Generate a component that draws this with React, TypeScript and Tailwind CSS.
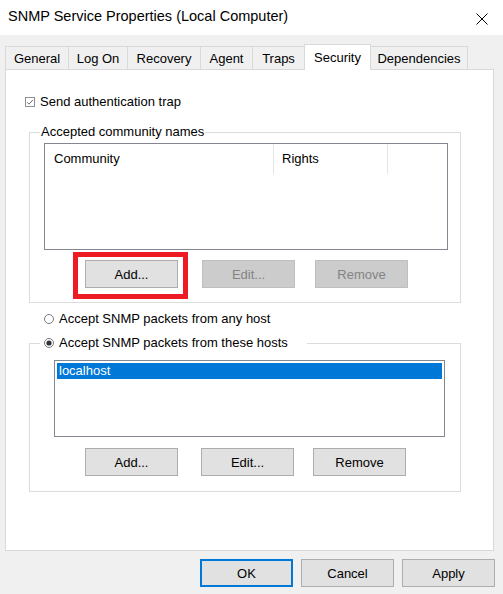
import React from 'react';

const tabs = [
  { label: 'General', w: 'w-[64px]' },
  { label: 'Log On', w: 'w-[60px]' },
  { label: 'Recovery', w: 'w-[74px]' },
  { label: 'Agent', w: 'w-[53px]' },
  { label: 'Traps', w: 'w-[53px]' },
  { label: 'Security', w: 'w-[67px]', active: true },
  { label: 'Dependencies', w: 'w-[98px]' },
];

const WinButton: React.FC<{ label: string; disabled?: boolean; isDefault?: boolean; className?: string; children?: React.ReactNode }> = ({
  label,
  disabled,
  isDefault,
  className = '',
  children,
}) => {
  const look = disabled
    ? 'bg-[#cccccc] border-[#bfbfbf] text-[#838383]'
    : isDefault
    ? 'bg-[#e1e1e1] border-[#0078d7] text-black shadow-[inset_0_0_0_1px_#0078d7]'
    : 'bg-[#e1e1e1] border-[#adadad] text-black';
  return (
    <div className={`relative flex h-[28px] w-[93px] items-center justify-center border ${look} ${className}`}>
      <span className="leading-none">{label}</span>
      {children}
    </div>
  );
};

const CheckBox: React.FC = () => (
  <svg width="10" height="10" viewBox="0 0 10 10" className="shrink-0">
    <rect x="0.5" y="0.5" width="9" height="9" fill="#fff" stroke="#8f8f8f" />
    <path d="M2 5.2 L4 7.2 L8 2.8" fill="none" stroke="#6d6d6d" strokeWidth="1" />
  </svg>
);

const Radio: React.FC<{ checked?: boolean }> = ({ checked }) => (
  <svg width="10" height="10" viewBox="0 0 10 10" className="shrink-0">
    <circle cx="5" cy="5" r="4.5" fill="#fff" stroke="#7a7a7a" />
    {checked && <circle cx="5" cy="5" r="2.6" fill="#333" />}
  </svg>
);

export default function App() {
  return (
    <div className="w-[503px] h-[594px] overflow-hidden bg-[#f0f0f0] text-[13px] text-black" style={{ fontFamily: '"Liberation Sans", Arial, sans-serif' }}>
      {/* Title bar */}
      <div className="flex h-[35px] items-center justify-between bg-white pl-[8px] pr-[15px]">
        <span className="text-[14.5px] leading-none -mt-[3px]">SNMP Service Properties (Local Computer)</span>
        <svg width="12" height="12" viewBox="0 0 12 12" className="mt-[2px]">
          <path d="M0.5 0.5 L11.5 11.5 M11.5 0.5 L0.5 11.5" stroke="#000" strokeWidth="1" />
        </svg>
      </div>

      <div className="px-[5px]">
        {/* Tabs */}
        <div className="mt-[9px] flex h-[25px] items-end">
          {tabs.map((t, i) =>
            t.active ? (
              <div
                key={t.label}
                className={`relative z-10 -mb-px -ml-px flex h-[26px] ${t.w} items-start justify-center border-x border-t border-[#d9d9d9] bg-white pt-[3px]`}
              >
                {t.label}
              </div>
            ) : (
              <div
                key={t.label}
                className={`flex h-[23px] ${t.w} ${i === 0 ? '' : '-ml-px'} items-center justify-center border-x border-t border-[#d9d9d9] bg-[#f0f0f0] pt-[1px]`}
              >
                {t.label}
              </div>
            )
          )}
        </div>

        {/* Panel */}
        <div className="h-[482px] w-[489px] border border-[#d9d9d9] bg-white pt-[24px]">
          <div className="ml-[19px] flex h-[16px] items-center gap-[5px]">
            <CheckBox />
            <span>Send authentication trap</span>
          </div>

          <fieldset className="ml-[23px] mt-[14px] w-[432px] border border-[#dcdcdc] px-[10px] pb-[14px] pt-[3px]">
            <legend className="px-[1px] leading-[16px]">Accepted community names</legend>
            <div className="ml-[4px] h-[107px] w-[404px] border border-[#828790] bg-white">
              <div className="flex h-[30px]">
                <div className="flex w-[229px] items-center border-r border-[#e5e5e5] pl-[9px]">Community</div>
                <div className="flex w-[114px] items-center border-r border-[#e5e5e5] pl-[8px]">Rights</div>
              </div>
            </div>
            <div className="mt-[10px] flex">
              <WinButton label="Add..." className="ml-[45px]">
                <div className="pointer-events-none absolute -bottom-[12px] -left-[13px] -right-[11px] -top-[9px] border-[5px] border-[#ed1c24]" />
              </WinButton>
              <WinButton label="Edit..." disabled className="ml-[24px]" />
              <WinButton label="Remove" disabled className="ml-[20px]" />
            </div>
          </fieldset>

          <div className="ml-[38px] mt-[8px] flex h-[16px] items-center gap-[5px]">
            <Radio />
            <span>Accept SNMP packets from any host</span>
          </div>

          <fieldset className="ml-[23px] mt-[8px] w-[432px] border border-[#dcdcdc] px-[10px] pb-[15px] pt-[9px]">
            <legend className="flex items-center gap-[5px] pl-[4px] pr-[19px] leading-[16px]">
              <Radio checked />
              <span>Accept SNMP packets from these hosts</span>
            </legend>
            <div className="ml-[14px] h-[77px] w-[391px] border border-[#828790] bg-white p-[2px]">
              <div className="flex h-[16px] items-center bg-[#0078d7] pl-[2px] text-white">localhost</div>
            </div>
            <div className="mt-[11px] flex">
              <WinButton label="Add..." className="ml-[45px]" />
              <WinButton label="Edit..." className="ml-[23px]" />
              <WinButton label="Remove" className="ml-[19px]" />
            </div>
          </fieldset>
        </div>
      </div>

      {/* Dialog buttons */}
      <div className="mt-[8px] flex justify-end gap-[8px] pr-[8px]">
        <WinButton label="OK" isDefault />
        <WinButton label="Cancel" />
        <WinButton label="Apply" />
      </div>
    </div>
  );
}
